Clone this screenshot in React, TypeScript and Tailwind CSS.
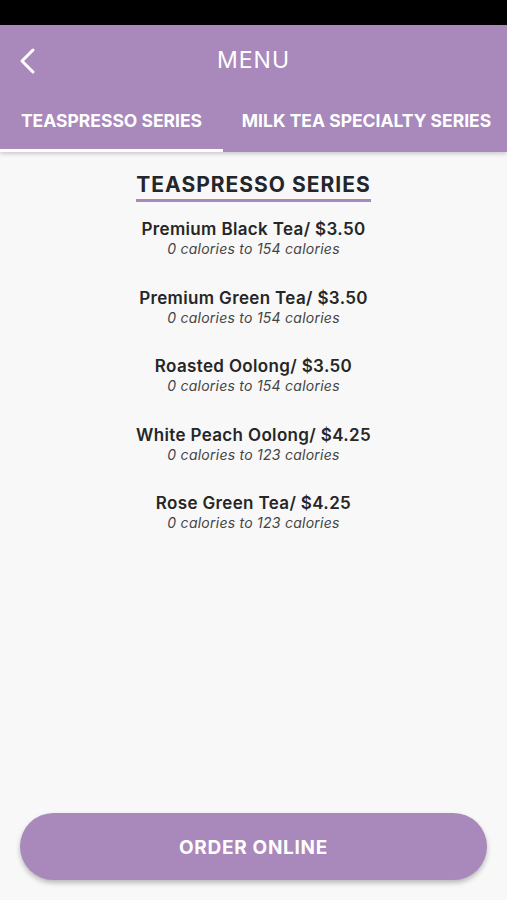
import React from "react";

const items = [
  { name: "Premium Black Tea/ $3.50", cal: "0 calories to 154 calories" },
  { name: "Premium Green Tea/ $3.50", cal: "0 calories to 154 calories" },
  { name: "Roasted Oolong/ $3.50", cal: "0 calories to 154 calories" },
  { name: "White Peach Oolong/ $4.25", cal: "0 calories to 123 calories" },
  { name: "Rose Green Tea/ $4.25", cal: "0 calories to 123 calories" },
];

export default function App() {
  return (
    <div
      className="w-[507px] h-[900px] flex flex-col bg-[#f8f8f8] overflow-hidden"
      style={{ fontFamily: "Inter, 'Open Sans', sans-serif" }}
    >
      <div className="h-[25px] bg-black shrink-0" />
      <div className="bg-[#a988bb] shrink-0 shadow-[0_2px_4px_rgba(0,0,0,0.18)] relative z-10">
        <div className="h-[70px] flex items-center relative">
          <div className="absolute left-[18px] top-[22px]">
            <svg width="18" height="28" viewBox="0 0 18 28" fill="none">
              <path d="M15 3 L4 14 L15 25" stroke="white" strokeWidth="3" strokeLinecap="round" strokeLinejoin="round" />
            </svg>
          </div>
          <div className="flex-1 text-center text-white text-[23px] tracking-[1px]">MENU</div>
        </div>
        <div className="h-[57px] flex">
          <div className="w-[223px] flex items-center justify-center border-b-[3px] border-white text-white font-bold text-[17.5px] pb-[2px]">
            TEASPRESSO SERIES
          </div>
          <div className="flex-1 flex items-center justify-center border-b-[3px] border-transparent text-white font-bold text-[17.5px] pb-[2px] pl-[3px]">
            MILK TEA SPECIALTY SERIES
          </div>
        </div>
      </div>
      <div className="flex-1 flex flex-col items-center pt-[20px]">
        <div className="text-[21px] font-bold text-[#23262b] tracking-[1px] border-b-[3px] border-[#a988bb] leading-[26px] pb-[1px]">
          TEASPRESSO SERIES
        </div>
        <div className="flex flex-col items-center gap-[30.5px] mt-[17px]">
          {items.map((it) => (
            <div key={it.name} className="flex flex-col items-center">
              <div className="text-[17px] font-semibold text-[#262626] leading-[21px] tracking-[0.35px]">{it.name}</div>
              <div className="text-[14px] italic text-[#444] leading-[17px] tracking-[0.25px]">{it.cal}</div>
            </div>
          ))}
        </div>
      </div>
      <div className="px-[20px] pb-[20px] shrink-0">
        <div className="h-[67px] rounded-full bg-[#a988bb] shadow-[0_3px_5px_rgba(0,0,0,0.25)] flex items-center justify-center text-white font-bold text-[19px] tracking-[0.7px] pt-[3px]">
          ORDER ONLINE
        </div>
      </div>
    </div>
  );
}
